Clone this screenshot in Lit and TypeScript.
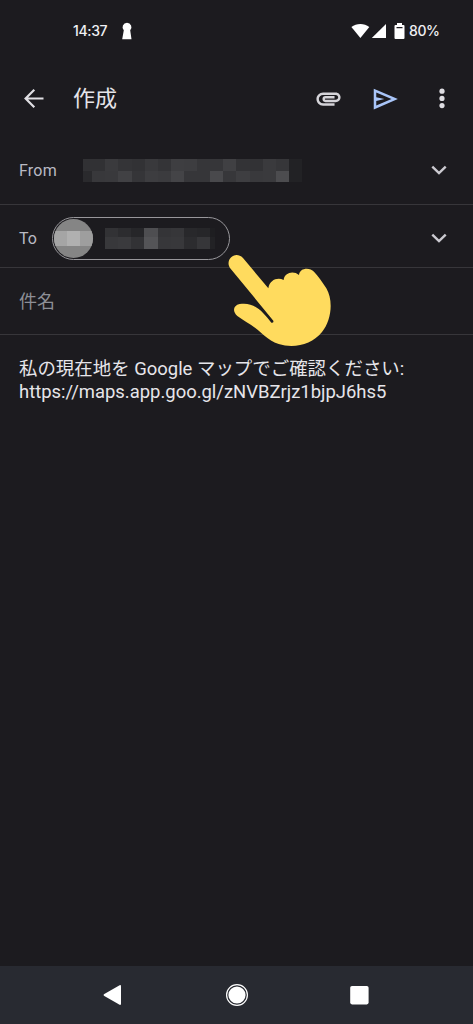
import { LitElement, html, css, svg } from "lit";
import { customElement, property } from "lit/decorators.js";

type Mosaic = { widths: number[]; tones: number[][]; heights: number[] };

const SENDER: Mosaic = {
  widths: [9, 13, 13, 14, 13, 13, 13, 13, 13, 13, 13, 13, 14, 13, 13, 13, 13],
  heights: [12, 11],
  tones: [
    [49, 49, 58, 52, 50, 57, 52, 62, 61, 54, 54, 64, 51, 50, 58, 54, 34],
    [42, 56, 57, 65, 53, 61, 59, 68, 54, 54, 73, 55, 62, 57, 58, 76, 34],
  ],
};

const RECIPIENT: Mosaic = {
  widths: [13, 13, 13, 14, 13, 13, 13, 13, 5],
  heights: [9, 12],
  tones: [
    [50, 44, 38, 78, 52, 54, 40, 38, 30],
    [56, 58, 50, 84, 55, 56, 44, 54, 34],
  ],
};

const AVATAR: Mosaic = {
  widths: [13, 13, 13],
  heights: [15],
  tones: [[165, 176, 158]],
};

@customElement("redacted-text")
class RedactedText extends LitElement {
  @property({ attribute: false }) data!: Mosaic;

  static styles = css`
    :host { display: block; flex: none; }
    svg { display: block; }
  `;

  render() {
    const { widths, heights, tones } = this.data;
    const w = widths.reduce((a, b) => a + b, 0);
    const h = heights.reduce((a, b) => a + b, 0);
    const cells = [];
    let y = 0;
    for (let r = 0; r < heights.length; r++) {
      let x = 0;
      for (let c = 0; c < widths.length; c++) {
        const t = tones[r][c];
        cells.push(svg`<rect x=${x} y=${y} width=${widths[c]} height=${heights[r]} fill=${`rgb(${t},${t},${t > 120 ? t : t + 3})`} />`);
        x += widths[c];
      }
      y += heights[r];
    }
    return html`<svg width=${w} height=${h} shape-rendering="crispEdges" aria-hidden="true">${cells}</svg>`;
  }
}

@customElement("app-root")
class AppRoot extends LitElement {
  static styles = css`
    :host {
      display: flex;
      flex-direction: column;
      position: relative;
      width: 473px;
      height: 1024px;
      overflow: hidden;
      box-sizing: border-box;
      background: #1c1b1f;
      color: #e6e5ea;
      font-family: Roboto, "Noto Sans CJK JP", sans-serif;
    }
    * { box-sizing: border-box; }
    svg { display: block; flex: none; }
    .status {
      display: flex;
      align-items: center;
      height: 62px;
      padding: 0 34px 0 73px;
      color: #f0f0f3;
      font: 500 14px/20px Inter, sans-serif;
    }
    .clock { width: 48px; letter-spacing: -0.35px; }
    .signals { display: flex; align-items: center; margin-left: auto; }
    .level { width: 30px; margin-left: 4px; letter-spacing: -0.4px; white-space: nowrap; }
    .bar {
      display: flex;
      align-items: center;
      height: 74px;
      padding: 0 22px;
    }
    .title {
      flex: 1;
      margin: 0 0 0 27px;
      font-size: 22px;
      line-height: 30px;
      font-weight: 400;
    }
    .actions { display: flex; align-items: center; }
    .attach { margin: 0 27px 2px 0; }
    .send { margin-right: 33px; }
    .field {
      display: flex;
      align-items: center;
      padding: 0 22px 0 19px;
      border-bottom: 1px solid #37363a;
    }
    .from { height: 69px; }
    .to { height: 63px; padding-top: 4px; }
    .subject { height: 67px; padding-bottom: 2px; color: #8d8f96; font-size: 18px; }
    .label { color: #b9bac3; font-size: 16px; }
    .from .label { width: 64px; letter-spacing: 0.2px; }
    .to .label { width: 33px; }
    .chevron { margin-left: auto; }
    .chip {
      display: flex;
      align-items: center;
      width: 177.5px;
      height: 43px;
      padding-left: 1px;
      border: 1.5px solid #98979b;
      border-radius: 22px;
    }
    .avatar {
      display: flex;
      align-items: center;
      justify-content: center;
      width: 39px;
      height: 39px;
      margin-right: 12px;
      border-radius: 50%;
      overflow: hidden;
      background: #858585;
    }
    .message {
      flex: 1;
      padding: 23px 19px 0;
      font-size: 18.45px;
      line-height: 23px;
      white-space: nowrap;
    }
    .line { display: block; height: 23px; }
    .nav {
      display: grid;
      grid-template-columns: repeat(3, 123.5px);
      justify-content: center;
      align-items: center;
      justify-items: center;
      height: 58px;
      background: #282a31;
    }
    .hand { position: absolute; left: 220px; top: 245px; }
  `;

  private chevron() {
    return html`<svg class="chevron" width="24" height="24" viewBox="0 0 24 24" fill="none" stroke="#cbcad0" stroke-width="2.4"><path d="M5.3 8.7 12 15.2 18.7 8.7" /></svg>`;
  }

  render() {
    return html`
      <header class="status">
        <span class="clock">14:37</span>
        <svg width="12" height="18" viewBox="0 0 12 18" fill="#fff"><path d="M6 .7a4.5 4.5 0 0 1 3.2 7.6l1.3 8.9H1.2L2.8 8.3A4.5 4.5 0 0 1 6 .7Z" /></svg>
        <div class="signals">
          <svg width="55" height="18" viewBox="0 0 55 18" fill="#fff">
            <path d="M1.4 5.1C6.4.9 14.3.9 19.3 5.1L10.4 16Z" />
            <path d="M36 1.9V16H21.8Z" />
            <path fill-rule="evenodd" d="M47 1h5v2h1.5q1 0 1 1v12q0 1-1 1h-8q-1 0-1-1V4q0-1 1-1H47ZM46.5 5v1.3h6V5Z" />
          </svg>
          <span class="level">80%</span>
        </div>
      </header>
      <div class="bar">
        <svg width="24" height="24" viewBox="0 0 24 24" fill="none" stroke="#e0dfe4" stroke-width="2.2"><path d="M21.5 11.5H3.6M12.3 2.8 3.6 11.5l8.7 8.7" /></svg>
        <h1 class="title">作成</h1>
        <div class="actions">
          <svg class="attach" width="29" height="29" viewBox="0 0 24 24" fill="#d5d4d9"><path d="M2 12.5C2 9.46 4.46 7 7.5 7H18c2.21 0 4 1.79 4 4s-1.79 4-4 4H9.5a2.5 2.5 0 0 1 0-5H17v2H9.41c-.55 0-.55 1 0 1H18c1.1 0 2-.9 2-2s-.9-2-2-2H7.5C5.57 9 4 10.57 4 12.5S5.57 16 7.5 16H17v2H7.5C4.46 18 2 15.54 2 12.5z" /></svg>
          <svg class="send" width="30" height="30" viewBox="0 0 24 24" fill="#a9c5f8"><path d="M3 20.3V3.7L22.3 12 3 20.3ZM5 17.2 17.2 12 5 6.8v3.7l6.5 1.5L5 13.5Z" /></svg>
          <svg width="18" height="24" viewBox="0 0 18 24" fill="#dedde2"><circle cx="9" cy="4.2" r="2.6" /><circle cx="9" cy="11.4" r="2.6" /><circle cx="9" cy="18.6" r="2.6" /></svg>
        </div>
      </div>
      <div class="field from"><span class="label">From</span><redacted-text .data=${SENDER}></redacted-text>${this.chevron()}</div>
      <div class="field to">
        <span class="label">To</span>
        <div class="chip"><div class="avatar"><redacted-text .data=${AVATAR}></redacted-text></div><redacted-text .data=${RECIPIENT}></redacted-text></div>
        ${this.chevron()}
      </div>
      <div class="field subject">件名</div>
      <main class="message"><span class="line">私の現在地を Google マップでご確認ください:</span><span class="line">https://maps.app.goo.gl/zNVBZrjz1bjpJ6hs5</span></main>
      <nav class="nav">
        <svg width="20" height="22" viewBox="0 0 20 22" fill="#fff"><path d="M16.6 1.2q1.4-.6 1.4 1v17.6q0 1.6-1.4 1L1.3 12q-1.4-1 0-2Z" /></svg>
        <svg width="24" height="24" viewBox="0 0 24 24"><circle cx="12" cy="12" r="10.4" fill="none" stroke="#fff" stroke-width="1.2" /><circle cx="12" cy="12" r="8.6" fill="#fff" /></svg>
        <svg width="20" height="20" viewBox="0 0 20 20" fill="#fff"><rect x=".2" y="1" width="18.4" height="18.4" rx="1.8" /></svg>
      </nav>
      <svg class="hand" width="120" height="110" viewBox="0 0 360 330" fill="#ffdb5e"><path d="M30 69C14 45 45 15 69 39L145 130C149 105 172 96 191 105C193 83 220 75 237 90C239 68 269 66 282 80C294 92 307 112 319 130C341 168 334 226 306 261C276 299 222 311 176 297C142 286 123 260 105 248C89 236 69 226 52 213C36 199 40 181 59 177C103 170 127 199 154 233Q162 234 160 227Z" /></svg>
    `;
  }
}
